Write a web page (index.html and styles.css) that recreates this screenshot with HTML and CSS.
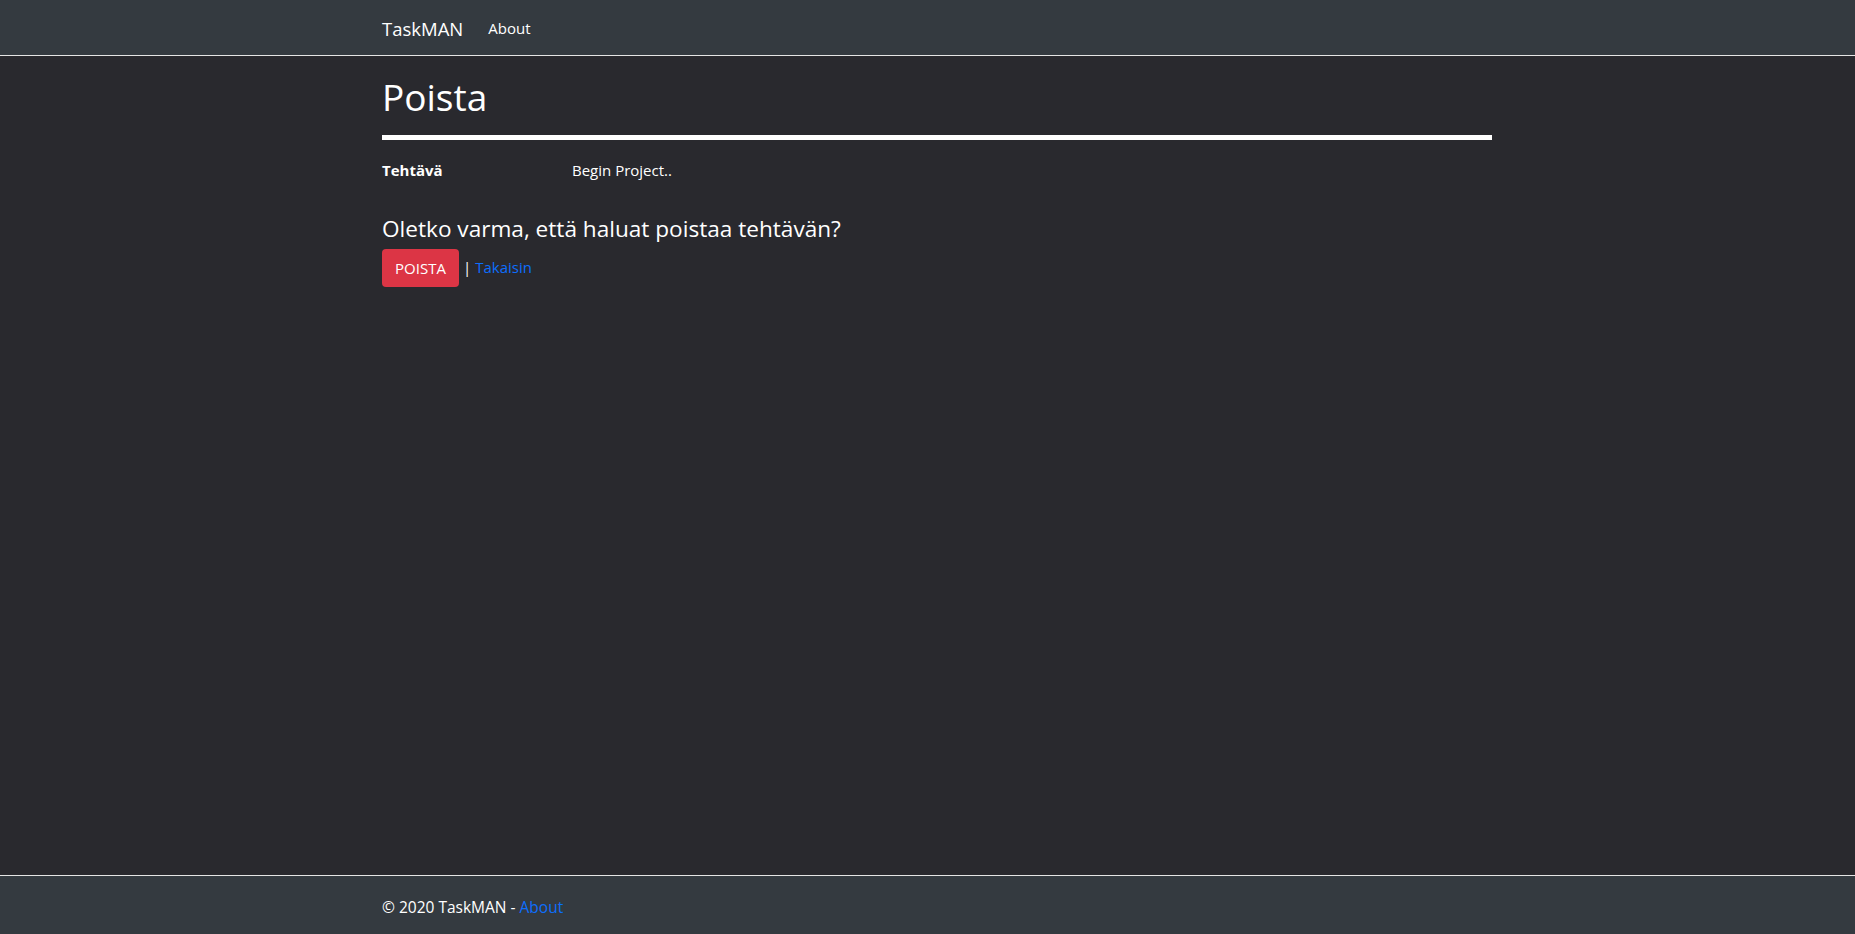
FILE: index.html
```html
<!DOCTYPE html>
<html lang="fi">
<head>
<meta charset="utf-8">
<title>Poista - TaskMAN</title>
<link rel="stylesheet" href="styles.css">
</head>
<body>
<div class="page">
  <header class="navbar">
    <div class="container nav-inner">
      <a class="brand" href="#">TaskMAN</a>
      <a class="nav-link" href="#">About</a>
    </div>
  </header>
  <main class="container main">
    <h1 class="title">Poista</h1>
    <hr class="rule">
    <dl class="details">
      <dt>Tehtävä</dt>
      <dd>Begin Project..</dd>
    </dl>
    <h3 class="question">Oletko varma, että haluat poistaa tehtävän?</h3>
    <form class="actions">
      <button type="button" class="btn-danger">POISTA</button>
      <span class="sep">|</span>
      <a class="link" href="#">Takaisin</a>
    </form>
  </main>
  <footer class="footer">
    <div class="container footer-inner">© 2020 TaskMAN - <a class="link" href="#">About</a></div>
  </footer>
</div>
</body>
</html>
```

FILE: styles.css
```css
* { box-sizing: border-box; }
html, body { margin: 0; height: 100%; }
body {
  background: #29292e;
  color: #ffffff;
  font-family: "Open Sans", "Noto Sans", sans-serif;
  font-size: 15px;
  line-height: 1.5;
}
.page { display: flex; flex-direction: column; min-height: 100vh; }
.container {
  width: 1110px;
  margin-left: calc(50% - 545.5px);
}
.navbar {
  background: #343a40;
  border-bottom: 1px solid #e5e5e5;
  height: 56px;
  display: flex;
  align-items: center;
  padding-top: 2px;
}
.nav-inner { display: flex; align-items: center; gap: 25px; }
.brand { color: #fff; text-decoration: none; font-size: 18.5px; }
.nav-link { color: #fff; text-decoration: none; font-size: 15px; }
.main { flex: 1; padding-top: 19px; }
.title { font-weight: 400; font-size: 37px; margin: 0; line-height: 1.2; }
.rule { border: 0; height: 5px; background: #fff; margin: 16px 0 0 0; }
.details { display: flex; margin: 19px 0 0 0; }
.details dt { width: 190px; font-weight: 700; }
.details dd { margin: 0; }
.question { font-weight: 400; font-size: 22.6px; margin: 33px 0 0 0; line-height: 1.2; }
.actions { display: flex; align-items: center; margin-top: 7px; }
.btn-danger {
  background: #dc3545;
  color: #fff;
  border: 0;
  border-radius: 4px;
  height: 38px;
  width: 77px;
  font-family: inherit;
  font-size: 15px;
  padding: 0;
}
.sep { color: #fff; margin-left: 4px; margin-bottom: 2px; }
.actions .link { margin-left: 4px; margin-bottom: 2px; }
.link { color: #0d6efd; text-decoration: none; }
.footer {
  background: #343a40;
  border-top: 1px solid #e5e5e5;
  height: 59px;
  display: flex;
  align-items: center;
}
.footer-inner { padding-top: 5px; font-size: 15.5px; }
```
